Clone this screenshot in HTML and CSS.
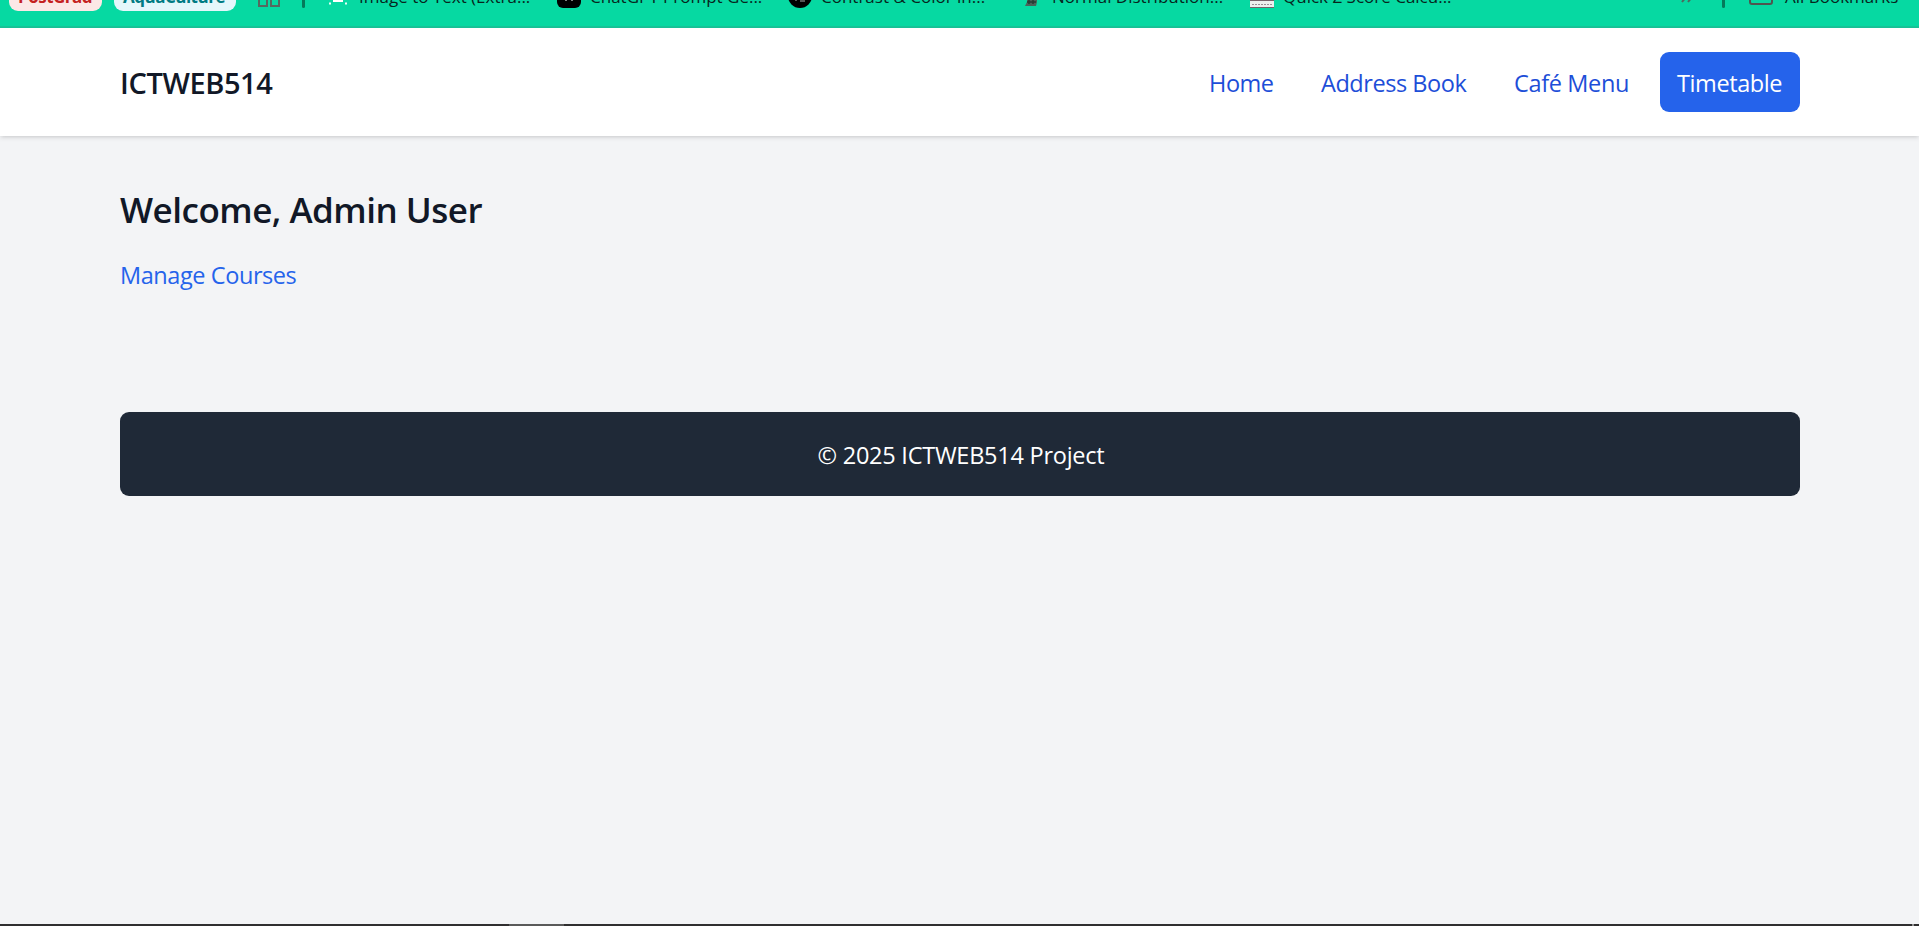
FILE: index.html
```html
<!DOCTYPE html>
<html lang="en">
<head>
<meta charset="utf-8">
<title>ICTWEB514</title>
<link rel="stylesheet" href="styles.css">
</head>
<body>
<div class="bookmarks">
  <div class="bookmark-row">
    <span class="pill pill-red">PostGrad</span>
    <span class="pill pill-teal">AquaCulture</span>
    <svg class="apps" width="22" height="24" viewBox="0 0 22 24" fill="none" stroke="#56695f" stroke-width="2"><path d="M1 2h8v8H1zM13 2h8v8h-8zM1 14h8v8H1zM13 14h8v8h-8z"/></svg>
    <span class="divider"></span>
    <span class="bookmark b-image"><svg width="24" height="24" viewBox="0 0 24 24"><path d="M7 5h10v13H7z" fill="#fff"/><path d="M3 4h2M19 4h2M3 19.500h2M19 19.500h2" stroke="#e4fff7" stroke-width="2"/></svg><span>Image to Text (Extra...</span></span>
    <span class="bookmark b-chat"><svg width="24" height="24" viewBox="0 0 24 24"><rect width="24" height="24" rx="6"/><path d="M9 17v-5l3-5 3 5v5M9 14h6" fill="none" stroke="#aaa" stroke-width="1.500"/></svg><span>ChatGPT Prompt Ge...</span></span>
    <span class="bookmark b-contrast"><svg width="24" height="24" viewBox="0 0 24 24"><circle cx="12" cy="12" r="12"/><path d="M8 17v-7M12 17h5" stroke="#555" stroke-width="2"/></svg><span>Contrast &amp; Color in...</span></span>
    <span class="bookmark b-normal"><svg width="14" height="24" viewBox="0 0 14 24"><path d="M3 6h10v12l-1 4H1l2-4z" fill="#4b6158"/><path d="M3 18h9M5 14v6M9 14v6" stroke="#263d35" stroke-width="1.500"/></svg><span>Normal Distribution...</span></span>
    <span class="bookmark b-score"><svg width="24" height="24" viewBox="0 0 24 24"><path d="M0 3h24v21H0z" fill="#77616a"/><path d="M0 17h24v6H0z" fill="#eee"/><path d="M2 20.500h20" stroke="#998f94" stroke-width="1" stroke-dasharray="2 1"/></svg><span>Quick Z Score Calcu...</span></span>
    <svg class="more" width="12" height="14" viewBox="0 0 12 14" fill="none" stroke="#4d685c" stroke-width="2"><path d="M1 1l4 5-4 5M7 1l4 5-4 5"/></svg>
    <span class="divider divider-end"></span>
    <span class="bookmark b-all"><svg width="24" height="24" viewBox="0 0 24 24" fill="none" stroke="#50554f" stroke-width="2"><path d="M1 3h8l3 3h11v12q0 2-2 2H3q-2 0-2-2z"/></svg><span>All Bookmarks</span></span>
  </div>
</div>
<header class="site-header">
  <a class="brand">ICTWEB514</a>
  <nav class="nav">
    <a class="nav-link w-home">Home</a>
    <a class="nav-link w-address">Address Book</a>
    <a class="nav-link w-menu">Café Menu</a>
    <a class="nav-link w-time active">Timetable</a>
  </nav>
</header>
<main class="content">
  <h1 class="welcome">Welcome, Admin User</h1>
  <a class="manage">Manage Courses</a>
</main>
<footer class="site-footer"><span>© 2025 ICTWEB514 Project</span></footer>
<div class="taskbar"><span class="task"></span><span class="task-end"></span></div>
</body>
</html>
```
FILE: styles.css
```css
* { box-sizing: border-box; }
body {
  margin: 0;
  height: 926px;
  overflow: hidden;
  display: flex;
  flex-direction: column;
  background: #f3f4f6;
  color: #111827;
  font: 23.5px/36px "Open Sans", "Noto Sans", sans-serif;
  white-space: nowrap;
}
svg { display: block; flex: none; }
.bookmarks {
  flex: none;
  height: 28px;
  overflow: hidden;
  background: #06d9a2;
  border-bottom: 2px solid #18c498;
}
.bookmark-row {
  display: flex;
  align-items: center;
  height: 30px;
  margin-top: -19px;
  padding-left: 9px;
  color: #06251c;
  font-size: 17px;
  line-height: 30px;
  letter-spacing: 0;
}
.pill {
  flex: none;
  height: 30px;
  padding-left: 9px;
  border-radius: 9px;
  font-weight: 700;
  line-height: 32px;
  letter-spacing: -0.5px;
}
.pill-red { width: 93px; background: #fce8e6; color: #c5221f; }
.pill-teal { width: 122px; margin-left: 12px; background: #e4f7fb; color: #007b83; }
.apps { margin-left: 22px; }
.divider {
  flex: none;
  width: 3px;
  height: 24px;
  margin-left: 22px;
  border-radius: 2px;
  background: #057a5a;
}
.bookmark { display: flex; flex: none; align-items: center; height: 30px; gap: 9px; }
.bookmark > span { padding-top: 2px; }
.b-image { width: 231px; margin-left: 21px; }
.b-chat { width: 231px; }
.b-contrast { width: 236px; }
.b-normal { width: 226px; gap: 14px; }
.b-score { width: 431px; }
.more { margin-top: 4px; }
.divider-end { margin-left: 29px; }
.b-all { margin-left: 24px; gap: 12px; }
.site-header {
  flex: none;
  display: flex;
  align-items: center;
  justify-content: space-between;
  height: 108px;
  padding: 0 119px 0 120px;
  background: #fff;
  box-shadow: 0 1.5px 4.5px rgba(0, 0, 0, .1), 0 1.5px 3px -1.5px rgba(0, 0, 0, .1);
}
.brand { padding-top: 2px; font-size: 29px; font-weight: 600; letter-spacing: -0.4px; }
.nav { display: flex; gap: 12px; }
.nav-link {
  height: 60px;
  padding: 13px 0 11px 18px;
  border-radius: 9px;
  color: #1d4ed8;
  letter-spacing: -0.45px;
}
.w-home { width: 100px; }
.w-address { width: 182px; }
.w-menu { width: 151px; padding-left: 17px; letter-spacing: -0.35px; }
.w-time { width: 140px; padding-left: 17px; letter-spacing: -0.4px; }
.active { background: #2563eb; color: #fff; }
.content { flex: none; height: 276px; padding: 47px 120px; }
.welcome {
  margin: 0 0 20px;
  font-size: 35px;
  font-weight: 600;
  line-height: 54px;
  letter-spacing: -0.5px;
}
.manage { display: block; color: #2563eb; letter-spacing: -0.42px; }
.site-footer {
  flex: none;
  height: 84px;
  margin: 0 119px 0 120px;
  padding: 25px 23px 23px 25px;
  border-radius: 9px;
  background: #1f2937;
  color: #fff;
  text-align: center;
  letter-spacing: -0.25px;
}
.taskbar {
  display: flex;
  justify-content: space-between;
  height: 2px;
  margin-top: auto;
  padding: 0 5px 0 509px;
  background: #302f30;
}
.task { width: 55px; background: #5a5a5a; }
.task-end { width: 2px; background: #929292; }
```
